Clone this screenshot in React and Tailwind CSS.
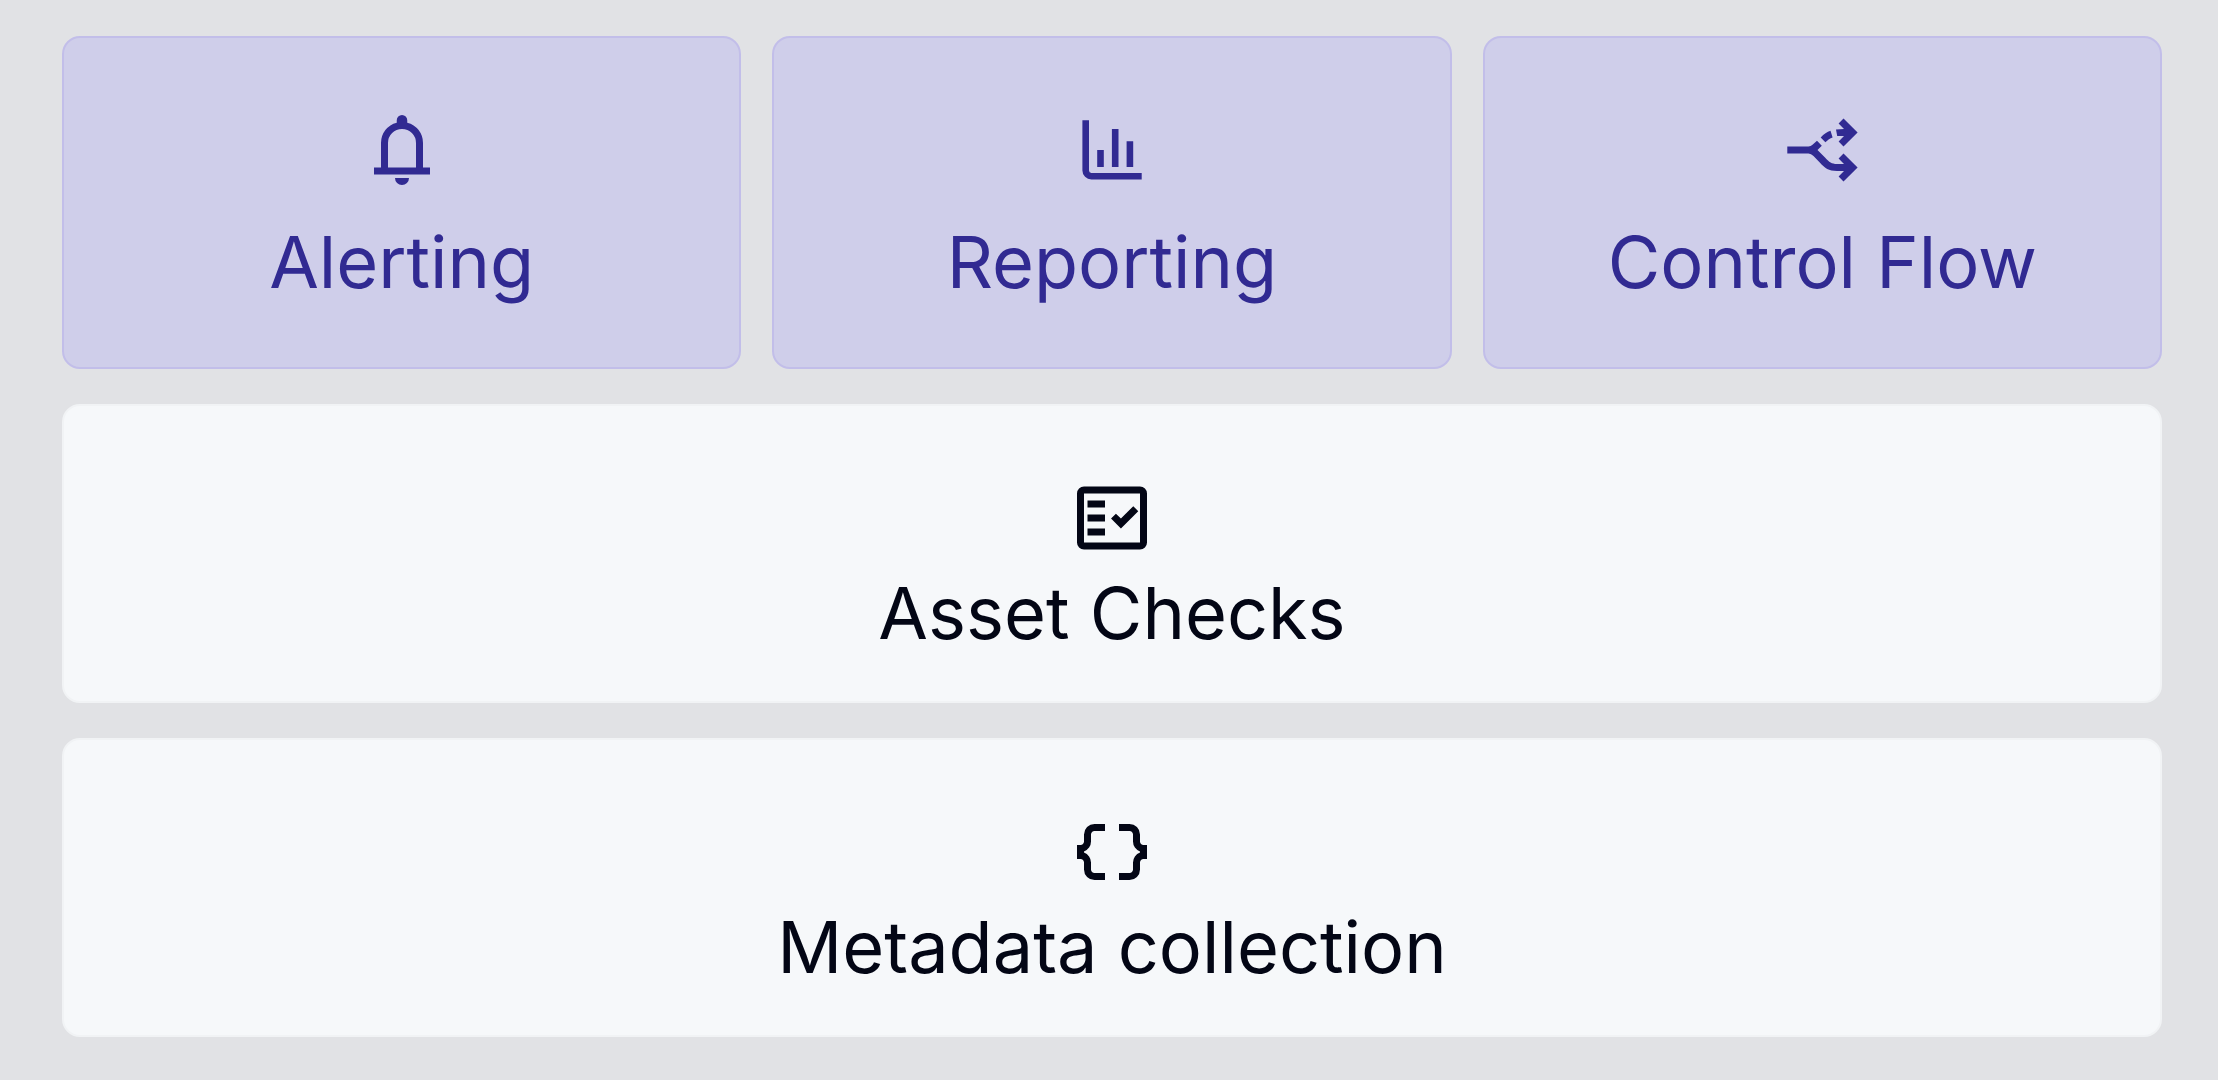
function SymbolIcon({ d }) {
  return (
    <svg className="size-[84px]" viewBox="0 -960 960 960" fill="currentColor" aria-hidden="true">
      <path d={d} />
    </svg>
  );
}

function BellIcon() {
  return (
    <SymbolIcon d="M160-200v-80h80v-280q0-83 50-147.5T420-792v-28q0-25 17.5-42.5T480-880q25 0 42.5 17.5T540-820v28q80 20 130 84.5T720-560v280h80v80H160Zm320 120q-33 0-56.5-23.5T400-160h160q0 33-23.5 56.5T480-80ZM320-280h320v-280q0-66-47-113t-113-47q-66 0-113 47t-47 113v280Z" />
  );
}

function ChartIcon() {
  return (
    <svg className="size-[84px]" viewBox="0 0 84 84" fill="none" stroke="currentColor" strokeWidth="6.6" aria-hidden="true">
      <path d="M15.7 12.2V62.5a5.7 5.7 0 0 0 5.7 5.7H71.7M30.5 42V59M45.2 21V59M59.9 33.3V59" />
    </svg>
  );
}

function FlowIcon() {
  return (
    <svg className="size-[84px]" viewBox="10 8 84 84" fill="currentColor" aria-hidden="true">
      <path d="M17.3 46.5H38.5Q40.8 46.3 42.5 44.8L47 40.8L51.8 45.8L47.5 50L55 57.5C59.5 62.3 61.5 63.9 67 64H74L68.6 58.4L73.5 53.4L87.6 67.5L73.5 81.5L68.6 76.5L74 71H67C58.5 71 55 68.3 50 62.8L43.5 56Q41 53.5 38.5 53.5H17.3Z" />
      <path d="M50.7 37.4C54 34 57 32 60.5 30.8L62.6 37.6C60 38.6 57.8 40 55.4 42.3Z" />
      <path d="M66 29.5Q70 29 74 29L68.6 23.4L73.5 18.4L87.6 32.5L73.5 46.6L68.6 41.6L74 36H67.2Z" />
    </svg>
  );
}

function ChecklistIcon() {
  return (
    <SymbolIcon d="M160-120q-33 0-56.5-23.5T80-200v-560q0-33 23.5-56.5T160-840h640q33 0 56.5 23.5T880-760v560q0 33-23.5 56.5T800-120H160Zm0-80h640v-560H160v560Zm40-80h200v-80H200v80Zm382-80 198-198-57-57-141 142-57-57-56 57 113 113Zm-382-80h200v-80H200v80Zm0-160h200v-80H200v80Z" />
  );
}

function BracesIcon() {
  return (
    <SymbolIcon d="M560-160v-80h120q17 0 28.5-11.5T720-280v-80q0-38 22-69t58-44v-14q-36-13-58-44t-22-69v-80q0-17-11.5-28.5T680-720H560v-80h120q50 0 85 35t35 85v80q0 17 11.5 28.5T840-560h40v160h-40q-17 0-28.5 11.5T800-360v80q0 50-35 85t-85 35H560Zm-280 0q-50 0-85-35t-35-85v-80q0-17-11.5-28.5T120-400H80v-160h40q17 0 28.5-11.5T160-600v-80q0-50 35-85t85-35h120v80H280q-17 0-28.5 11.5T240-680v80q0 38-22 69t-58 44v14q36 13 58 44t22 69v80q0 17 11.5 28.5T280-240h120v80H280Z" />
  );
}

function FeatureCard({ icon, title }) {
  return (
    <section className="flex flex-1 flex-col items-center gap-[34px] rounded-[18px] border-2 border-[#c2bee9] bg-[#cfceea] pt-[70px] pb-[69px] text-[#312a92]">
      {icon}
      <h2 className="text-7xl leading-[72px]">{title}</h2>
    </section>
  );
}

function WideCard({ icon, title }) {
  return (
    <section className="flex flex-col items-center gap-[17px] rounded-[18px] border-2 border-[#f1f3f5] bg-[#f6f8fa] pt-[70px] pb-[52px] text-[#030615]">
      {icon}
      <h2 className="text-7xl leading-[72px]">{title}</h2>
    </section>
  );
}

export default function App() {
  return (
    <main className="flex min-h-screen flex-col gap-[35px] bg-[#e1e2e5] pt-9 pr-14 pb-10 pl-[62px] font-['Inter',sans-serif]">
      <div className="flex gap-[31px]">
        <FeatureCard icon={<BellIcon />} title="Alerting" />
        <FeatureCard icon={<ChartIcon />} title="Reporting" />
        <FeatureCard icon={<FlowIcon />} title="Control Flow" />
      </div>
      <WideCard icon={<ChecklistIcon />} title="Asset Checks" />
      <WideCard icon={<BracesIcon />} title="Metadata collection" />
    </main>
  );
}
